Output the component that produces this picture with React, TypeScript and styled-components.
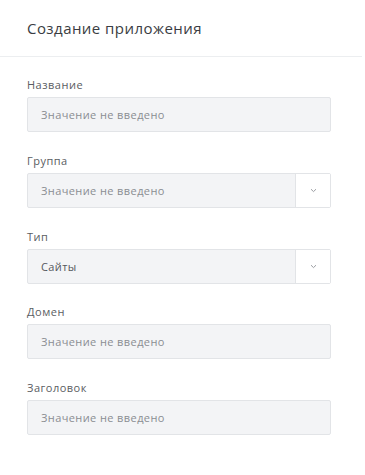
import React from "react";
import styled, { createGlobalStyle } from "styled-components";

const GlobalStyle = createGlobalStyle`
  body {
    margin: 0;
    background: #fff;
    font-family: "Open Sans", "Liberation Sans", sans-serif;
  }
`;

const Panel = styled.div`
  width: 362px;
  background: #fff;
`;

const Header = styled.div`
  height: 57px;
  padding: 0 27px;
  display: flex;
  align-items: center;
  border-bottom: 1px solid #eceef0;
  box-sizing: border-box;
`;

const Title = styled.h1`
  margin: 0 0 1px;
  font-size: 15px;
  font-weight: 400;
  color: #3a3d42;
  letter-spacing: 0.45px;
`;

const Form = styled.div`
  padding: 20px 31px 0 27px;
  display: flex;
  flex-direction: column;
  gap: 20.75px;
`;

const Field = styled.div`
  display: flex;
  flex-direction: column;
  gap: 5px;
`;

const Label = styled.label`
  font-size: 11px;
  line-height: 15px;
  color: #5a5d62;
  letter-spacing: 0.5px;
`;

const Box = styled.div`
  height: 35px;
  display: flex;
  border: 1px solid #e2e4e7;
  border-radius: 2px;
  background: #f3f4f6;
  box-sizing: border-box;
`;

const Value = styled.div<{ $filled?: boolean }>`
  flex: 1;
  display: flex;
  align-items: center;
  padding-left: 13px;
  font-size: 11px;
  letter-spacing: 0.4px;
  color: ${(p) => (p.$filled ? "#55585d" : "#8a8d92")};
`;

const Toggle = styled.div`
  width: 34px;
  display: flex;
  align-items: center;
  justify-content: center;
  background: #fff;
  border-left: 1px solid #e2e4e7;
`;

const Chevron = () => (
  <svg width="7" height="5" viewBox="0 0 7 5">
    <path d="M1 1.2 L3.5 3.6 L6 1.2" fill="none" stroke="#9a9da2" strokeWidth="1" />
  </svg>
);

interface FieldProps {
  label: string;
  value?: string;
  select?: boolean;
}

const FormField: React.FC<FieldProps> = ({ label, value, select }) => (
  <Field>
    <Label>{label}</Label>
    <Box>
      <Value $filled={!!value}>{value || "Значение не введено"}</Value>
      {select && (
        <Toggle>
          <Chevron />
        </Toggle>
      )}
    </Box>
  </Field>
);

export default function App() {
  return (
    <>
      <GlobalStyle />
      <Panel>
        <Header>
          <Title>Создание приложения</Title>
        </Header>
        <Form>
          <FormField label="Название" />
          <FormField label="Группа" select />
          <FormField label="Тип" value="Сайты" select />
          <FormField label="Домен" />
          <FormField label="Заголовок" />
        </Form>
      </Panel>
    </>
  );
}
